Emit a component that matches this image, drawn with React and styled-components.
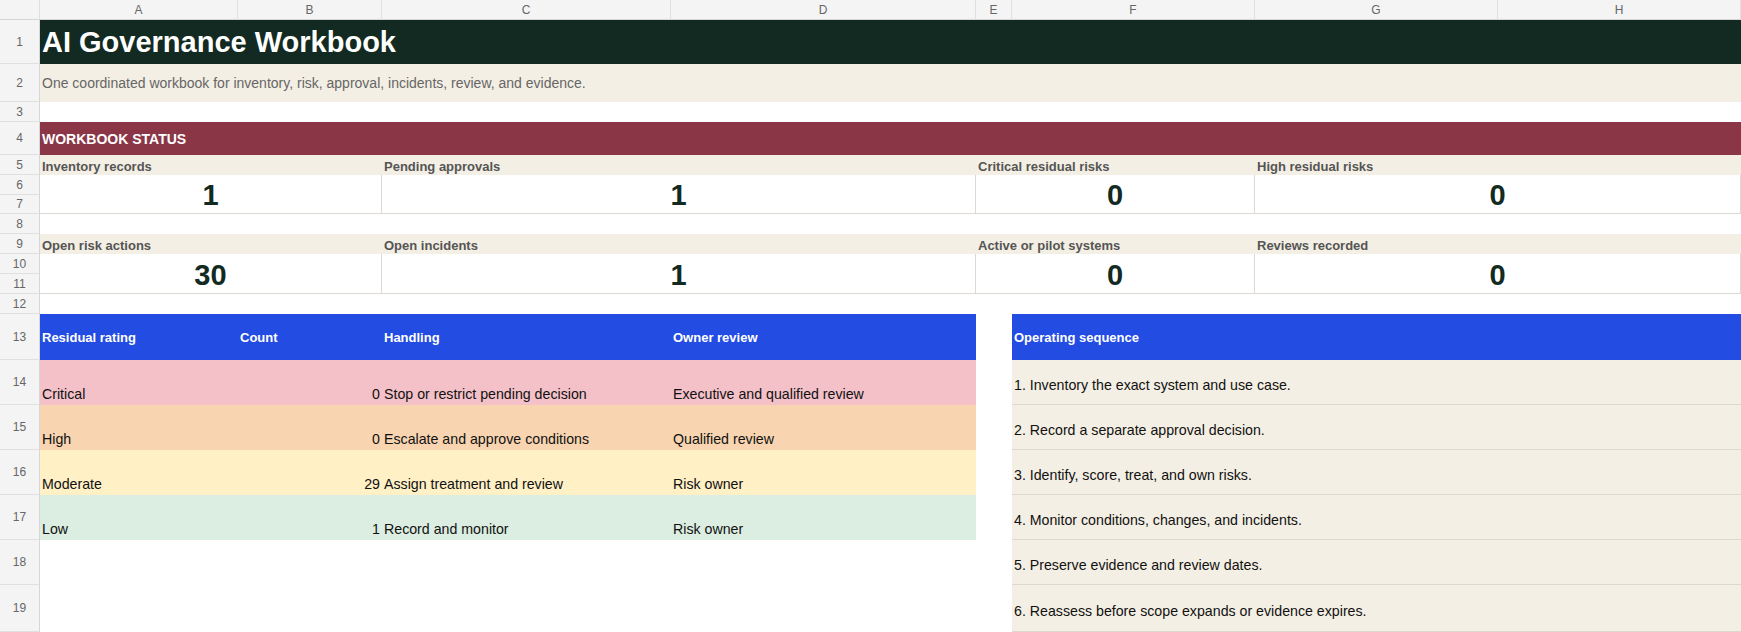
import React from "react";
import styled, { createGlobalStyle } from "styled-components";

const Global = createGlobalStyle`
  html, body { margin: 0; padding: 0; background: #fff; }
  body { font-family: "Liberation Sans", Arial, sans-serif; }
`;

const Sheet = styled.div`
  display: grid;
  grid-template-columns: 40px 198px 144px 289px 305px 36px 243px 243px 243px;
  grid-template-rows: 20px 44px 38px 20px 33px 20px 20px 19px 20px 20px 20px 20px 20px 46px 45px 45px 45px 45px 45px 47px;
  width: 1741px;
  height: 632px;
  overflow: hidden;
`;

const ColHead = styled.div`
  grid-row: 1;
  grid-column: ${(p) => p.$c};
  background: #f4f4f4;
  border-right: 1px solid #e0e0e0;
  border-bottom: 1px solid #d6d6d6;
  color: #666;
  font-size: 12px;
  display: flex;
  align-items: center;
  justify-content: center;
`;

const RowHead = styled.div`
  grid-column: 1;
  grid-row: ${(p) => p.$r};
  background: #f4f4f4;
  border-right: 1px solid #d6d6d6;
  border-bottom: 1px solid #e0e0e0;
  color: #666;
  font-size: 12px;
  display: flex;
  align-items: center;
  justify-content: center;
`;

const Cell = styled.div`
  grid-column: ${(p) => p.$c};
  grid-row: ${(p) => p.$r};
  background: ${(p) => p.$bg || "transparent"};
  color: ${(p) => p.$color || "#111"};
  font-size: ${(p) => p.$size || 14.2}px;
  font-weight: ${(p) => (p.$bold ? 700 : 400)};
  display: flex;
  align-items: ${(p) => p.$v || "center"};
  justify-content: ${(p) => p.$h || "flex-start"};
  padding: ${(p) => p.$pad || "0 2px"};
  white-space: nowrap;
  overflow: hidden;
  box-sizing: border-box;
  ${(p) => p.$border && `border-right: 1px solid #ddd9d0; border-bottom: 1px solid #ddd9d0;`}
  ${(p) => p.$under && `border-bottom: 1px solid #ddd9d0;`}
`;

const cols = ["A", "B", "C", "D", "E", "F", "G", "H"];
const rowLines = [];
for (let i = 1; i <= 19; i++) rowLines.push(i);

const statsA = [
  ["Inventory records", "1", "2 / 4"],
  ["Pending approvals", "1", "4 / 6"],
  ["Critical residual risks", "0", "6 / 8"],
  ["High residual risks", "0", "8 / 10"],
];
const statsB = [
  ["Open risk actions", "30", "2 / 4"],
  ["Open incidents", "1", "4 / 6"],
  ["Active or pilot systems", "0", "6 / 8"],
  ["Reviews recorded", "0", "8 / 10"],
];

const ratings = [
  ["Critical", "0", "Stop or restrict pending decision", "Executive and qualified review", "#f4c1c9"],
  ["High", "0", "Escalate and approve conditions", "Qualified review", "#f8d5b0"],
  ["Moderate", "29", "Assign treatment and review", "Risk owner", "#fff0c6"],
  ["Low", "1", "Record and monitor", "Risk owner", "#dbeee1"],
];

const steps = [
  "1. Inventory the exact system and use case.",
  "2. Record a separate approval decision.",
  "3. Identify, score, treat, and own risks.",
  "4. Monitor conditions, changes, and incidents.",
  "5. Preserve evidence and review dates.",
  "6. Reassess before scope expands or evidence expires.",
];

function Stats({ list, labelRow, valRow }) {
  return list.map(([l, v, c]) => (
    <React.Fragment key={l}>
      <Cell $c={c} $r={labelRow} $bg="#f4efe4" $bold $size={13} $color="#555" $v="flex-end" $pad="0 2px 1px">
        {l}
      </Cell>
      <Cell $c={c} $r={valRow} $bg="#fff" $bold $size={29} $color="#122a22" $h="center" $pad="3px 2px 0" $border>
        {v}
      </Cell>
    </React.Fragment>
  ));
}

export default function App() {
  return (
    <>
      <Global />
      <Sheet>
        <ColHead $c={1} />
        {cols.map((c, i) => (
          <ColHead key={c} $c={i + 2}>{c}</ColHead>
        ))}
        {rowLines.map((r) => (
          <RowHead key={r} $r={r + 1}>{r}</RowHead>
        ))}

        <Cell $c="2 / 10" $r={2} $bg="#122a22" $color="#fff" $bold $size={29}>AI Governance Workbook</Cell>
        <Cell $c="2 / 10" $r={3} $bg="#f4efe4" $color="#666" $size={14}>
          One coordinated workbook for inventory, risk, approval, incidents, review, and evidence.
        </Cell>
        <Cell $c="2 / 10" $r={5} $bg="#8b3646" $color="#fff" $bold $size={14}>WORKBOOK STATUS</Cell>

        <Stats list={statsA} labelRow={6} valRow="7 / 9" />
        <Stats list={statsB} labelRow={10} valRow="11 / 13" />

        <Cell $c={2} $r={14} $bg="#234ce3" $color="#fff" $bold $size={13}>Residual rating</Cell>
        <Cell $c={3} $r={14} $bg="#234ce3" $color="#fff" $bold $size={13}>Count</Cell>
        <Cell $c={4} $r={14} $bg="#234ce3" $color="#fff" $bold $size={13}>Handling</Cell>
        <Cell $c={5} $r={14} $bg="#234ce3" $color="#fff" $bold $size={13}>Owner review</Cell>

        {ratings.map(([n, c, h, o, bg], i) => (
          <React.Fragment key={n}>
            <Cell $c={2} $r={15 + i} $bg={bg} $v="flex-end" $pad="0 2px 3px">{n}</Cell>
            <Cell $c={3} $r={15 + i} $bg={bg} $v="flex-end" $h="flex-end" $pad="0 2px 3px">{c}</Cell>
            <Cell $c={4} $r={15 + i} $bg={bg} $v="flex-end" $pad="0 2px 3px">{h}</Cell>
            <Cell $c={5} $r={15 + i} $bg={bg} $v="flex-end" $pad="0 2px 3px">{o}</Cell>
          </React.Fragment>
        ))}

        <Cell $c="7 / 10" $r={14} $bg="#234ce3" $color="#fff" $bold $size={13}>Operating sequence</Cell>
        {steps.map((s, i) => (
          <Cell key={s} $c="7 / 10" $r={15 + i} $bg="#f4efe4" $pad="6px 2px 0" $under>
            {s}
          </Cell>
        ))}
      </Sheet>
    </>
  );
}
